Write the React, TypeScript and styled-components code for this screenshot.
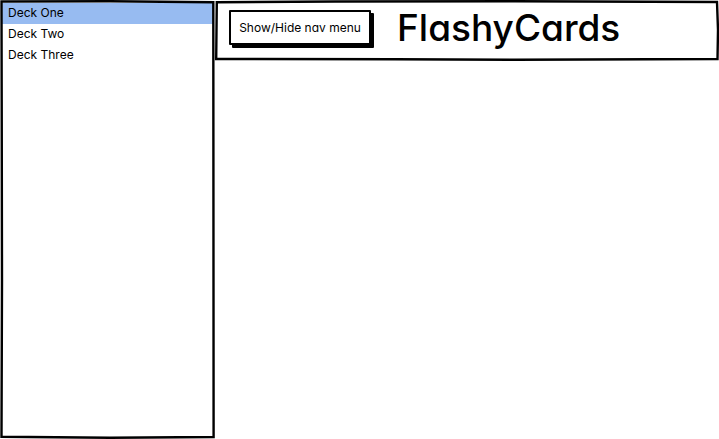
import React, { useState } from "react";
import styled, { createGlobalStyle } from "styled-components";

const GlobalStyle = createGlobalStyle`
  *, *::before, *::after { box-sizing: border-box; }
  body {
    margin: 0;
    background: #fff;
    color: #000;
    font-family: Inter, "Liberation Sans", sans-serif;
    font-feature-settings: "cv11";
    font-size: 12px;
    line-height: 21px;
  }
`;

const Page = styled.div`
  display: flex;
  align-items: flex-start;
  min-height: 100vh;
`;

const Sidebar = styled.nav`
  position: relative;
  flex: 0 0 215px;
  align-self: stretch;
  padding: 3px 2px;
`;

const DeckList = styled.ul`
  list-style: none;
  margin: 0;
  padding: 0;
`;

const DeckButton = styled.button<{ $selected: boolean }>`
  display: block;
  width: 100%;
  height: 21px;
  padding: 0 6px 2px;
  border: 0;
  background: ${(p) => (p.$selected ? "#97bbf1" : "transparent")};
  color: inherit;
  font: inherit;
  font-size: 12px;
  font-feature-settings: inherit;
  line-height: 19px;
  text-align: left;
  cursor: pointer;
`;

const Header = styled.header`
  position: relative;
  flex: 1;
  display: flex;
  align-items: flex-start;
  gap: 26px;
  height: 61px;
  padding: 10px 14px;
`;

const MenuButton = styled.button`
  flex: none;
  height: 35px;
  width: 142px;
  padding: 0;
  border: 2px solid #000;
  border-radius: 1px;
  background: #fff;
  box-shadow: 3px 3px 0 #000;
  color: inherit;
  font: inherit;
  font-feature-settings: inherit;
  white-space: nowrap;
  cursor: pointer;
`;

const Title = styled.h1`
  margin: 0;
  font-size: 37px;
  line-height: 35px;
  font-weight: 500;
`;

const FrameSvg = styled.svg`
  position: absolute;
  inset: 0;
  width: 100%;
  height: 100%;
  pointer-events: none;

  path {
    fill: none;
    stroke: #000;
    stroke-width: 2.4px;
    stroke-linecap: square;
    vector-effect: non-scaling-stroke;
  }
`;

/* Hand-drawn outline that stretches with its panel. */
function SketchFrame({ width, height, d }: { width: number; height: number; d: string }) {
  return (
    <FrameSvg viewBox={`0 0 ${width} ${height}`} preserveAspectRatio="none" aria-hidden="true">
      <path d={d} />
    </FrameSvg>
  );
}

const decks = ["Deck One", "Deck Two", "Deck Three"];

export default function App() {
  const [selected, setSelected] = useState(decks[0]);
  const [open, setOpen] = useState(true);

  return (
    <>
      <GlobalStyle />
      <Page>
        {open && (
          <Sidebar id="decks" aria-label="Decks">
            <DeckList>
              {decks.map((deck) => (
                <li key={deck}>
                  <DeckButton $selected={deck === selected} onClick={() => setSelected(deck)}>
                    {deck}
                  </DeckButton>
                </li>
              ))}
            </DeckList>
            <SketchFrame
              width={215}
              height={439}
              d="M1.5 1.5 L110 1.2 L213.3 2.2 L213.4 140 L213.6 437 L110 437.7 L1.5 436.8 L2 280 L1.7 100 Z"
            />
          </Sidebar>
        )}
        <Header>
          <SketchFrame
            width={504}
            height={61}
            d="M1.8 2.2 L120 1.5 L300 1.3 L502 2 L503 30 L502.5 59 L300 59.8 L180 59.3 L1.2 59 Z"
          />
          <MenuButton aria-expanded={open} aria-controls="decks" onClick={() => setOpen(!open)}>
            Show/Hide nav menu
          </MenuButton>
          <Title>FlashyCards</Title>
        </Header>
      </Page>
    </>
  );
}
